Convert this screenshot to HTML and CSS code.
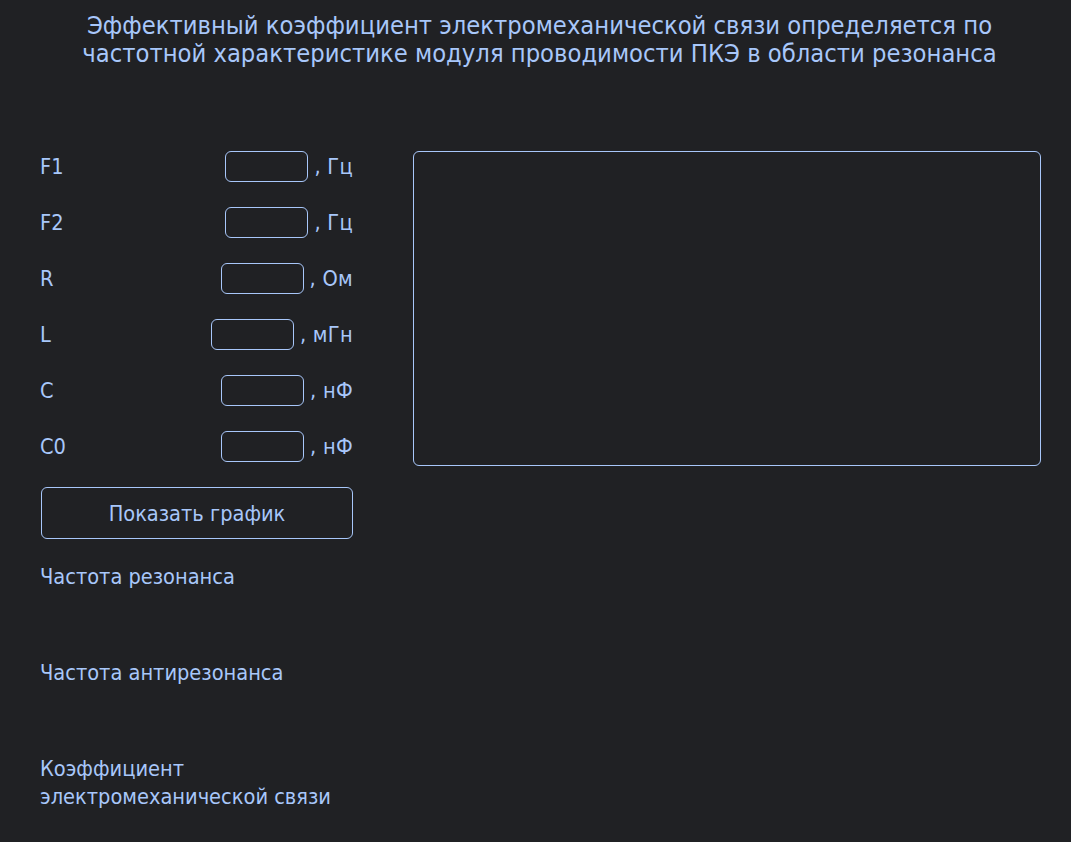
FILE: index.html
```html
<!DOCTYPE html>
<html lang="ru">
<head>
<meta charset="utf-8">
<title>Коэффициент электромеханической связи</title>
<link rel="stylesheet" href="styles.css">
</head>
<body>
<h1 class="title">Эффективный коэффициент электромеханической связи определяется по частотной характеристике модуля проводимости ПКЭ в области резонанса</h1>
<main class="layout">
  <section class="controls">
    <div class="row"><span class="label">F1</span><span class="field"><input class="inp" type="text"><span class="unit">, Гц</span></span></div>
    <div class="row"><span class="label">F2</span><span class="field"><input class="inp" type="text"><span class="unit">, Гц</span></span></div>
    <div class="row"><span class="label">R</span><span class="field"><input class="inp" type="text"><span class="unit">, Ом</span></span></div>
    <div class="row"><span class="label">L</span><span class="field"><input class="inp" type="text"><span class="unit">, мГн</span></span></div>
    <div class="row"><span class="label">C</span><span class="field"><input class="inp" type="text"><span class="unit">, нФ</span></span></div>
    <div class="row"><span class="label">C0</span><span class="field"><input class="inp" type="text"><span class="unit">, нФ</span></span></div>
    <button class="btn" type="button">Показать график</button>
    <div class="result">Частота резонанса</div>
    <div class="result">Частота антирезонанса</div>
    <div class="result">Коэффициент электромеханической связи</div>
  </section>
  <section class="chart"></section>
</main>
</body>
</html>
```
FILE: styles.css
```css
html, body {
  margin: 0;
  padding: 0;
  background: #202124;
}
body {
  color: #a8c7fa;
  font-family: "DejaVu Sans Condensed", "DejaVu Sans", sans-serif;
  font-size: 21.6px;
}
.title {
  margin: 12px 0 0 0;
  padding: 0 60px 0 68px;
  text-align: center;
  font-weight: normal;
  font-size: 25.3px;
  line-height: 28px;
}
.layout {
  display: flex;
  align-items: flex-start;
  gap: 60px;
  padding: 83px 0 0 40px;
}
.controls {
  width: 313px;
  display: flex;
  flex-direction: column;
}
.row {
  display: flex;
  align-items: center;
  justify-content: space-between;
  height: 31px;
  margin-bottom: 25px;
}
.label {
  line-height: 31px;
}
.field {
  display: flex;
  align-items: center;
  gap: 6px;
}
.inp {
  box-sizing: border-box;
  width: 83px;
  height: 31px;
  margin: 0;
  padding: 0 6px;
  background: transparent;
  border: 1px solid #a8c7fa;
  border-radius: 6px;
  color: #a8c7fa;
  font: inherit;
}
.unit {
  line-height: 31px;
  letter-spacing: 0.3px;
}
.btn {
  box-sizing: border-box;
  width: 312px;
  height: 52px;
  margin: 0 0 24px 1px;
  background: transparent;
  border: 1px solid #a8c7fa;
  border-radius: 6px;
  color: #a8c7fa;
  font: inherit;
}
.result {
  min-height: 96px;
  line-height: 28px;
}
.chart {
  box-sizing: border-box;
  width: 628px;
  height: 315px;
  border: 1px solid #a8c7fa;
  border-radius: 6px;
}
```
